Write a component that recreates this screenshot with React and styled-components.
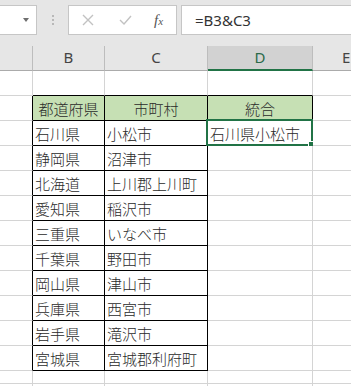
import React from "react";
import styled, { createGlobalStyle } from "styled-components";

const GlobalStyle = createGlobalStyle`
  html, body { margin: 0; padding: 0; background: #ffffff; }
  body { font-family: "Noto Sans", "Noto Sans CJK JP", sans-serif; }
  * { box-sizing: border-box; }
`;

const COLS = "33px 72px 103px 105px 1fr";
const GRID = "#d4d4d4";
const BLACK = "#000000";
const GREEN = "#217346";

const Page = styled.div`
  width: 351px;
  height: 386px;
  overflow: hidden;
  background: #ffffff;
`;

const FormulaBar = styled.div`
  height: 46px;
  padding-top: 5px;
  background: #e6e6e6;
  display: flex;
  align-items: flex-start;
`;

const NameBox = styled.div`
  width: 37px;
  height: 30px;
  background: #fff;
  border: 1px solid #c6c6c6;
  border-left: none;
  display: flex;
  align-items: center;
  justify-content: flex-end;
  padding-right: 7px;
`;

const Caret = styled.span`
  width: 0;
  height: 0;
  border-left: 3px solid transparent;
  border-right: 3px solid transparent;
  border-top: 4px solid #6e6e6e;
`;

const Grip = styled.div`
  width: 31px;
  height: 30px;
  display: flex;
  flex-direction: column;
  align-items: center;
  justify-content: center;
  gap: 2px;
`;

const Dot = styled.span`
  width: 2px;
  height: 2px;
  background: #b8b8b8;
`;

const ButtonBox = styled.div`
  width: 109px;
  height: 30px;
  background: #fff;
  border: 1px solid #c6c6c6;
  display: flex;
  align-items: center;
  padding-left: 13px;
`;

const IconSlot = styled.span`
  width: ${(p) => p.$w}px;
  display: flex;
  align-items: center;
  justify-content: flex-start;
`;

const Fx = styled.span`
  font-family: "Liberation Serif", "DejaVu Serif", serif;
  font-style: italic;
  font-size: 15px;
  color: #555;
  line-height: 1;
  sub {
    font-size: 11px;
    vertical-align: baseline;
  }
`;

const FormulaInput = styled.div`
  flex: 1;
  height: 30px;
  margin-left: 4px;
  background: #fff;
  border: 1px solid #c6c6c6;
  border-right: none;
  display: flex;
  align-items: center;
  padding-left: 13px;
  font-family: "Noto Sans", "Open Sans", sans-serif;
  font-size: 15px;
  color: #333;
`;

const HeaderRow = styled.div`
  display: grid;
  grid-template-columns: ${COLS};
  height: 25px;
  background: #e6e6e6;
`;

const ColHead = styled.div`
  display: flex;
  align-items: center;
  justify-content: ${(p) => (p.$pad != null ? "flex-start" : "center")};
  padding-left: ${(p) => (p.$pad != null ? p.$pad : 0)}px;
  padding-bottom: 2px;
  background: ${(p) => (p.$active ? "#d2d2d2" : "#e6e6e6")};
  border-right: ${(p) => (p.$last ? "none" : "1px solid #bdbdbd")};
  border-bottom: ${(p) => (p.$active ? `2px solid ${GREEN}` : "1px solid #ababab")};
  font-family: "Noto Sans", "Open Sans", sans-serif;
  font-size: 15px;
  color: ${(p) => (p.$active ? "#2b6a4a" : "#444")};
  overflow: hidden;
  white-space: nowrap;
`;

const Sheet = styled.div`
  display: grid;
  grid-template-columns: ${COLS};
  grid-template-rows: repeat(12, 25px) 13px 25px;
`;

const Cell = styled.div`
  position: relative;
  display: flex;
  align-items: center;
  justify-content: ${(p) => (p.$center ? "center" : "flex-start")};
  padding-left: ${(p) => (p.$center ? 0 : 2)}px;
  background: ${(p) => p.$bg || "#fff"};
  border-right: ${(p) => (p.$noRight ? "none" : `1px solid ${p.$r || GRID}`)};
  border-bottom: 1px solid ${(p) => p.$b || GRID};
  font-family: "Noto Sans CJK JP", "Noto Sans JP", sans-serif;
  font-size: 15px;
  font-weight: 300;
  line-height: 1;
  color: #2a2a2a;
  white-space: nowrap;
  overflow: visible;
`;

const Selection = styled.span`
  position: absolute;
  top: -2px;
  left: -2px;
  right: -1px;
  bottom: -1px;
  border: 2px solid ${GREEN};
  pointer-events: none;
`;

const FillHandle = styled.span`
  position: absolute;
  right: -4px;
  bottom: -4px;
  width: 6px;
  height: 6px;
  background: ${GREEN};
  outline: 1px solid #fff;
`;

const prefectures = ["石川県", "静岡県", "北海道", "愛知県", "三重県", "千葉県", "岡山県", "兵庫県", "岩手県", "宮城県"];
const cities = ["小松市", "沼津市", "上川郡上川町", "稲沢市", "いなべ市", "野田市", "津山市", "西宮市", "滝沢市", "宮城郡利府町"];

function cellText(r, c) {
  if (r === 1) {
    if (c === 1) return "都道府県";
    if (c === 2) return "市町村";
    if (c === 3) return "統合";
  }
  if (r >= 2 && r <= 11) {
    if (c === 1) return prefectures[r - 2];
    if (c === 2) return cities[r - 2];
    if (c === 3 && r === 2) return "石川県小松市";
  }
  return "";
}

function XIcon() {
  return (
    <svg width="12" height="12" viewBox="0 0 12 12">
      <path d="M1 1 L11 11 M11 1 L1 11" stroke="#c2c2c2" strokeWidth="1.4" fill="none" />
    </svg>
  );
}

function CheckIcon() {
  return (
    <svg width="13" height="10" viewBox="0 0 13 10">
      <path d="M1 5 L5 9 L12 1" stroke="#c2c2c2" strokeWidth="1.4" fill="none" />
    </svg>
  );
}

export default function App() {
  const rows = [];
  for (let r = 0; r < 14; r++) {
    for (let c = 0; c < 5; c++) {
      const inTable = (r >= 1 && r <= 11 && (c === 1 || c === 2)) || (r === 1 && c === 3);
      const rightBlack = inTable || (c === 0 && r >= 1 && r <= 11);
      const bottomBlack = inTable || (r === 0 && c >= 1 && c <= 3);
      const isHeader = r === 1 && c >= 1 && c <= 3;
      const selected = r === 2 && c === 3;
      rows.push(
        <Cell
          key={`${r}-${c}`}
          $r={rightBlack ? BLACK : undefined}
          $b={bottomBlack ? BLACK : undefined}
          $bg={isHeader ? "#c6e0b4" : undefined}
          $center={isHeader}
          $noRight={c === 4}
        >
          {cellText(r, c)}
          {selected && (
            <Selection>
              <FillHandle />
            </Selection>
          )}
        </Cell>
      );
    }
  }

  return (
    <>
      <GlobalStyle />
      <Page>
        <FormulaBar>
          <NameBox>
            <Caret />
          </NameBox>
          <Grip>
            <Dot />
            <Dot />
            <Dot />
          </Grip>
          <ButtonBox>
            <IconSlot $w={37}>
              <XIcon />
            </IconSlot>
            <IconSlot $w={35}>
              <CheckIcon />
            </IconSlot>
            <IconSlot $w={20}>
              <Fx>
                f<sub>x</sub>
              </Fx>
            </IconSlot>
          </ButtonBox>
          <FormulaInput>=B3&amp;C3</FormulaInput>
        </FormulaBar>
        <HeaderRow>
          <ColHead />
          <ColHead>B</ColHead>
          <ColHead>C</ColHead>
          <ColHead $active>D</ColHead>
          <ColHead $last $pad={29}>E</ColHead>
        </HeaderRow>
        <Sheet>{rows}</Sheet>
      </Page>
    </>
  );
}
